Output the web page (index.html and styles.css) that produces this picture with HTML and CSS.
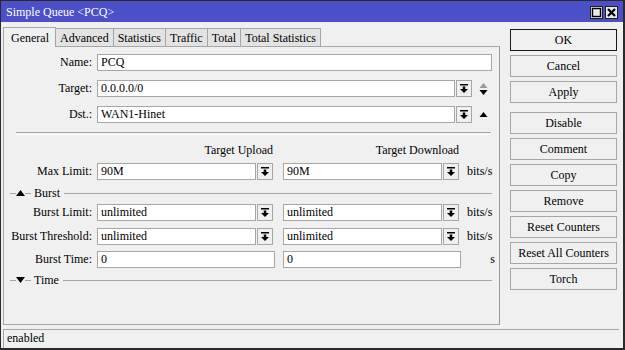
FILE: index.html
```html
<!DOCTYPE html>
<html lang="en">

<head>
    <meta charset="UTF-8">
    <title>Simple Queue &lt;PCQ&gt;</title>
    <link rel="stylesheet" href="styles.css">
</head>

<body>
    <div class="window">
        <div class="titlebar">
            <span class="title">Simple Queue &lt;PCQ&gt;</span>
            <div class="title-buttons">
                <span class="tbtn"><svg width="11" height="11" viewBox="0 0 11 11"><rect x="1.5" y="1.5" width="8" height="8" fill="none" stroke="#000" stroke-width="1.4"/></svg></span>
                <span class="tbtn"><svg width="11" height="11" viewBox="0 0 11 11"><path d="M2 2 L9 9 M9 2 L2 9" stroke="#000" stroke-width="2.2"/></svg></span>
            </div>
        </div>

        <div class="content">
            <div class="left">
                <!-- Tabs -->
                <div class="tabs">
                    <span class="tab active">General</span>
                    <span class="tab">Advanced</span>
                    <span class="tab">Statistics</span>
                    <span class="tab">Traffic</span>
                    <span class="tab">Total</span>
                    <span class="tab">Total Statistics</span>
                </div>

                <div class="panel">
                    <div class="row row-name">
                        <label>Name:</label>
                        <div class="field w-full">PCQ</div>
                    </div>
                    <div class="row">
                        <label>Target:</label>
                        <div class="field w-long">0.0.0.0/0</div>
                        <span class="drop"><svg width="8" height="9" viewBox="0 0 8 9"><rect x="0" y="0" width="8" height="1.5"/><rect x="2.7" y="2.5" width="2.6" height="2.5"/><path d="M0 5 H8 L4 9 Z"/></svg></span>
                        <span class="updown"><svg width="9" height="14" viewBox="0 0 9 14"><path d="M0.5 6 H8.5 L4.5 1 Z" fill="#999"/><path d="M0.5 8 H8.5 L4.5 13 Z" fill="#000"/></svg></span>
                    </div>
                    <div class="row">
                        <label>Dst.:</label>
                        <div class="field w-long">WAN1-Hinet</div>
                        <span class="drop"><svg width="8" height="9" viewBox="0 0 8 9"><rect x="0" y="0" width="8" height="1.5"/><rect x="2.7" y="2.5" width="2.6" height="2.5"/><path d="M0 5 H8 L4 9 Z"/></svg></span>
                        <span class="updown"><svg width="9" height="14" viewBox="0 0 9 14"><path d="M0.5 9 H8.5 L4.5 4 Z" fill="#000"/></svg></span>
                    </div>

                    <div class="separator"></div>

                    <div class="row head-row">
                        <span class="col-head">Target Upload</span>
                        <span class="col-head">Target Download</span>
                    </div>
                    <div class="row row-max">
                        <label>Max Limit:</label>
                        <div class="field w-short">90M</div>
                        <span class="drop"><svg width="8" height="9" viewBox="0 0 8 9"><rect x="0" y="0" width="8" height="1.5"/><rect x="2.7" y="2.5" width="2.6" height="2.5"/><path d="M0 5 H8 L4 9 Z"/></svg></span>
                        <div class="field w-short second">90M</div>
                        <span class="drop"><svg width="8" height="9" viewBox="0 0 8 9"><rect x="0" y="0" width="8" height="1.5"/><rect x="2.7" y="2.5" width="2.6" height="2.5"/><path d="M0 5 H8 L4 9 Z"/></svg></span>
                        <span class="unit">bits/s</span>
                    </div>

                    <div class="group-head burst-head">
                        <span class="dash"></span>
                        <svg width="9" height="6" viewBox="0 0 9 6"><path d="M0 6 H9 L4.5 0 Z"/></svg>
                        <span class="dash"></span>
                        <span class="group-title">Burst</span>
                        <span class="group-line"></span>
                    </div>
                    <div class="row row-burst">
                        <label>Burst Limit:</label>
                        <div class="field w-short">unlimited</div>
                        <span class="drop"><svg width="8" height="9" viewBox="0 0 8 9"><rect x="0" y="0" width="8" height="1.5"/><rect x="2.7" y="2.5" width="2.6" height="2.5"/><path d="M0 5 H8 L4 9 Z"/></svg></span>
                        <div class="field w-short second">unlimited</div>
                        <span class="drop"><svg width="8" height="9" viewBox="0 0 8 9"><rect x="0" y="0" width="8" height="1.5"/><rect x="2.7" y="2.5" width="2.6" height="2.5"/><path d="M0 5 H8 L4 9 Z"/></svg></span>
                        <span class="unit">bits/s</span>
                    </div>
                    <div class="row row-threshold">
                        <label>Burst Threshold:</label>
                        <div class="field w-short">unlimited</div>
                        <span class="drop"><svg width="8" height="9" viewBox="0 0 8 9"><rect x="0" y="0" width="8" height="1.5"/><rect x="2.7" y="2.5" width="2.6" height="2.5"/><path d="M0 5 H8 L4 9 Z"/></svg></span>
                        <div class="field w-short second">unlimited</div>
                        <span class="drop"><svg width="8" height="9" viewBox="0 0 8 9"><rect x="0" y="0" width="8" height="1.5"/><rect x="2.7" y="2.5" width="2.6" height="2.5"/><path d="M0 5 H8 L4 9 Z"/></svg></span>
                        <span class="unit">bits/s</span>
                    </div>
                    <div class="row row-time">
                        <label>Burst Time:</label>
                        <div class="field w-mid">0</div>
                        <div class="field w-mid second-mid">0</div>
                        <span class="unit unit-s">s</span>
                    </div>

                    <div class="group-head time-head">
                        <span class="dash"></span>
                        <svg width="9" height="6" viewBox="0 0 9 6"><path d="M0 0 H9 L4.5 6 Z"/></svg>
                        <span class="dash"></span>
                        <span class="group-title">Time</span>
                        <span class="group-line"></span>
                    </div>
                </div>
            </div>

            <!-- Action buttons -->
            <div class="actions">
                <button class="default">OK</button>
                <button>Cancel</button>
                <button>Apply</button>
                <button class="gap">Disable</button>
                <button>Comment</button>
                <button>Copy</button>
                <button>Remove</button>
                <button>Reset Counters</button>
                <button>Reset All Counters</button>
                <button>Torch</button>
            </div>
        </div>

        <div class="status">enabled</div>
    </div>
</body>

</html>
```

FILE: styles.css
```css
body {
    margin: 0;
    padding: 0;
    background-color: #ffffff;
    font-family: "Liberation Serif", serif;
    font-size: 12px;
    color: #000;
}

.window {
    width: 625px;
    height: 350px;
    box-sizing: border-box;
    border: 1px solid #2a2a2a;
    border-right-width: 2px;
    border-bottom-width: 2px;
    background-color: #f0f0f0;
    display: flex;
    flex-direction: column;
}

.titlebar {
    height: 21px;
    background-color: #4b50c8;
    color: #ffffff;
    display: flex;
    align-items: center;
    justify-content: space-between;
    padding: 1px 5px 0 5px;
    box-sizing: border-box;
    flex-shrink: 0;
}

.title {
    font-size: 12px;
}

.title-buttons {
    display: flex;
    gap: 2px;
}

.tbtn {
    width: 13px;
    height: 13px;
    box-sizing: border-box;
    border: 1px solid #202020;
    background-color: #e8e8e8;
    display: flex;
    align-items: center;
    justify-content: center;
}

.content {
    display: flex;
    padding: 4px 0 0 2px;
    height: 303px;
}

.left {
    width: 497px;
    display: flex;
    flex-direction: column;
}

.tabs {
    display: flex;
    align-items: flex-end;
    height: 20px;
}

.tab {
    height: 18px;
    box-sizing: border-box;
    padding: 1px 4px 0 4px;
    border: 1px solid #a6a6a6;
    border-bottom: none;
    border-left: none;
    background-color: #e3e3e3;
    line-height: 16px;
}

.tab.active {
    height: 20px;
    border-left: 1px solid #a6a6a6;
    background-color: #f0f0f0;
    padding: 2px 6px 0 7px;
    margin-bottom: -1px;
    position: relative;
    z-index: 1;
}

.panel {
    height: 279px;
    box-sizing: border-box;
    border: 1px solid #a6a6a6;
    border-right-color: #9a9a9a;
    padding-top: 7px;
}

.row {
    display: flex;
    align-items: center;
    height: 17px;
    margin-top: 9px;
}

.row-name {
    margin-top: 0;
}

label {
    width: 88px;
    margin-right: 5px;
    text-align: right;
}

.field {
    height: 17px;
    box-sizing: border-box;
    border: 1px solid #a6a6a6;
    background-color: #ffffff;
    padding-left: 3px;
    line-height: 15px;
    white-space: nowrap;
}

.w-full {
    width: 395px;
}

.w-long {
    width: 358px;
}

.w-short {
    width: 159px;
}

.w-mid {
    width: 178px;
}

.second {
    margin-left: 10px;
}

.second-mid {
    margin-left: 8px;
}

.drop {
    width: 16px;
    height: 17px;
    box-sizing: border-box;
    border: 1px solid #a6a6a6;
    background-color: #f0f0f0;
    margin-left: 1px;
    display: flex;
    align-items: center;
    justify-content: center;
}

.updown {
    margin-left: 7px;
    display: flex;
    align-items: center;
}

.unit {
    margin-left: 8px;
}

.unit-s {
    width: 26px;
    text-align: right;
}

.separator {
    margin: 9px 8px 0 12px;
    height: 1px;
    border-top: 1px solid #a6a6a6;
    border-bottom: 1px solid #ffffff;
}

.head-row {
    margin-top: 7px;
    height: 16px;
    padding-left: 93px;
}

.col-head {
    width: 176px;
    text-align: right;
}

.col-head + .col-head {
    margin-left: 10px;
}

.row-max {
    margin-top: 5px;
}

.group-head {
    display: flex;
    align-items: center;
    height: 12px;
    margin-left: 6px;
    margin-right: 7px;
}

.burst-head {
    margin-top: 7px;
}

.time-head {
    margin-top: 6px;
}

.dash {
    width: 6px;
    height: 1px;
    background-color: #a6a6a6;
}

.group-title {
    padding: 0 4px 0 3px;
}

.group-line {
    flex: 1;
    height: 1px;
    background-color: #a6a6a6;
}

.row-burst {
    margin-top: 5px;
}

.row-threshold {
    margin-top: 7px;
}

.row-time {
    margin-top: 6px;
}

.actions {
    margin-left: 10px;
    padding-top: 3px;
    display: flex;
    flex-direction: column;
    gap: 4px;
}

button {
    width: 107px;
    height: 22px;
    box-sizing: border-box;
    border: 1px solid #a6a6a6;
    background-color: #f0f0f0;
    font-family: "Liberation Serif", serif;
    font-size: 12px;
    color: #000;
    padding: 0;
}

button.default {
    border: 1px solid #1a1a1a;
}

button.gap {
    margin-top: 5px;
}

.status {
    margin: 1px 4px 0 2px;
    height: 19px;
    box-sizing: border-box;
    border-top: 1px solid #a6a6a6;
    border-left: 1px solid #a6a6a6;
    padding-left: 3px;
    line-height: 16px;
}
```
